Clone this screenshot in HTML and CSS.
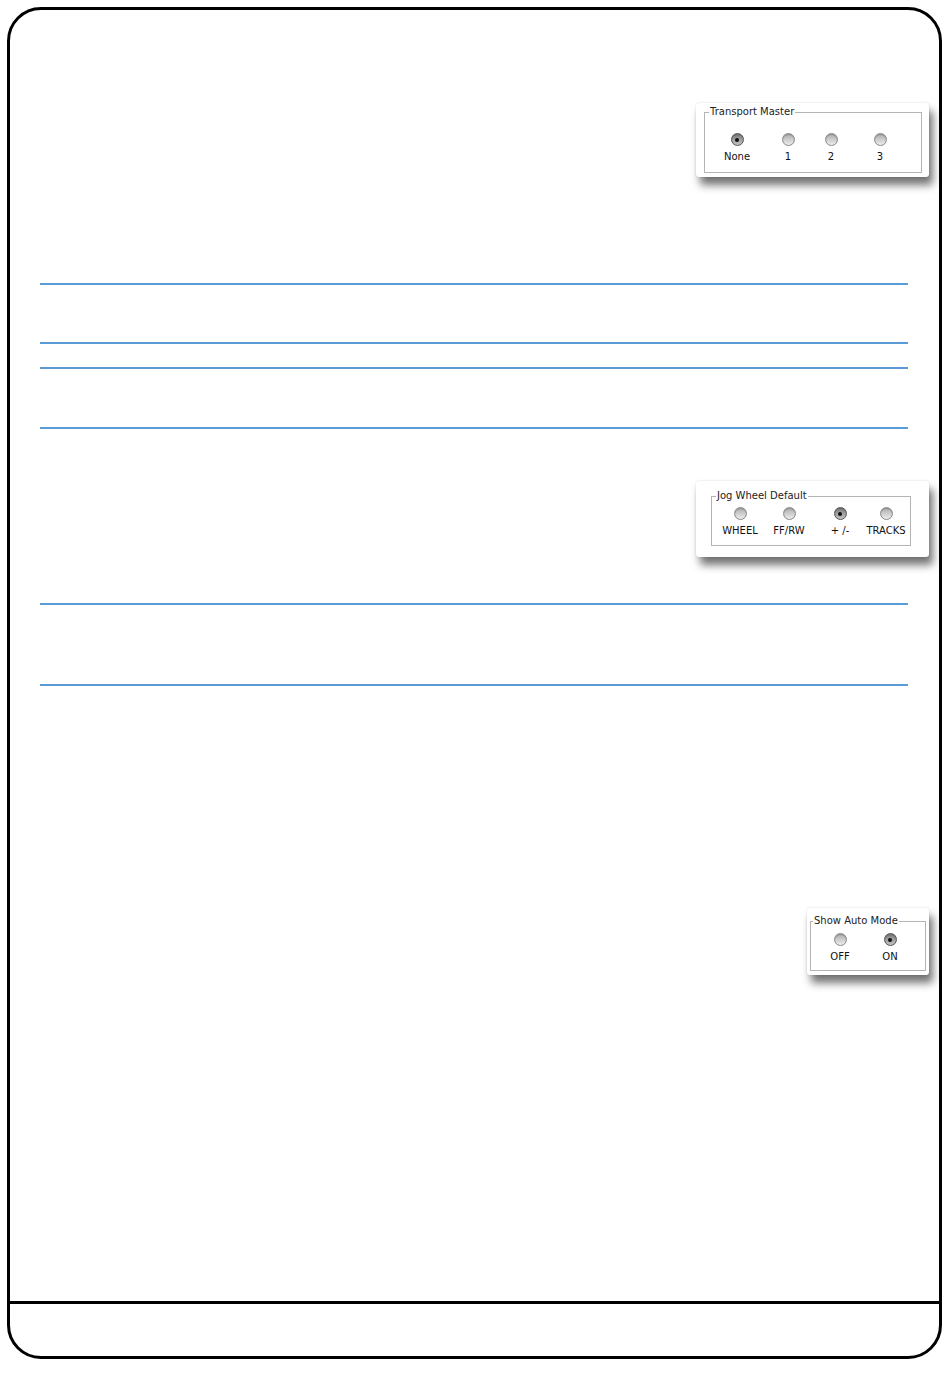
FILE: index.html
```html
<!DOCTYPE html>
<html lang="en">
<head>
    <meta charset="UTF-8">
    <title>Control Surface Settings</title>
    <link rel="stylesheet" href="styles.css">
</head>
<body>
    <div class="page">
        <div class="content">
            <!-- Transport Master -->
            <div class="panel panel-transport">
                <fieldset>
                    <legend>Transport Master</legend>
                    <div class="options">
                        <div class="option"><span class="radio checked"></span><span class="label">None</span></div>
                        <div class="option"><span class="radio"></span><span class="label">1</span></div>
                        <div class="option"><span class="radio"></span><span class="label">2</span></div>
                        <div class="option"><span class="radio"></span><span class="label">3</span></div>
                    </div>
                </fieldset>
            </div>

            <hr class="rule rule-1">
            <hr class="rule rule-2">
            <hr class="rule rule-3">
            <hr class="rule rule-4">

            <!-- Jog Wheel -->
            <div class="panel panel-jog">
                <fieldset>
                    <legend>Jog Wheel Default</legend>
                    <div class="options">
                        <div class="option"><span class="radio"></span><span class="label">WHEEL</span></div>
                        <div class="option"><span class="radio"></span><span class="label">FF/RW</span></div>
                        <div class="option"><span class="radio checked"></span><span class="label">+ /-</span></div>
                        <div class="option"><span class="radio"></span><span class="label">TRACKS</span></div>
                    </div>
                </fieldset>
            </div>

            <hr class="rule rule-5">
            <hr class="rule rule-6">

            <!-- Show Auto Mode -->
            <div class="panel panel-auto">
                <fieldset>
                    <legend>Show Auto Mode</legend>
                    <div class="options">
                        <div class="option"><span class="radio"></span><span class="label">OFF</span></div>
                        <div class="option"><span class="radio checked"></span><span class="label">ON</span></div>
                    </div>
                </fieldset>
            </div>
        </div>
        <div class="footer"></div>
    </div>
</body>
</html>
```

FILE: styles.css
```css
* {
    box-sizing: border-box;
}

body {
    margin: 0;
    background: #ffffff;
    font-family: "DejaVu Sans", sans-serif;
    color: #111;
}

.page {
    width: 935px;
    height: 1352px;
    margin: 7px 0 0 7px;
    border: 3px solid #000;
    border-radius: 34px;
    display: flex;
    flex-direction: column;
}

.content {
    flex: 1;
    display: flex;
    flex-direction: column;
}

.footer {
    height: 55px;
    border-top: 3px solid #000;
}

/* lignes bleues */
.rule {
    height: 2px;
    border: none;
    background: #5b9bd5;
    margin: 0 31px 0 30px;
}

.rule-1 { margin-top: 106px; }
.rule-2 { margin-top: 57px; }
.rule-3 { margin-top: 23px; }
.rule-4 { margin-top: 58px; }
.rule-5 { margin-top: 46px; }
.rule-6 { margin-top: 79px; }

/* panneaux */
.panel {
    align-self: flex-end;
    margin-right: 10px;
    background: #ffffff;
    border-radius: 3px;
    box-shadow: 4px 8px 8px rgba(0, 0, 0, 0.55), 0 0 2px rgba(0, 0, 0, 0.15);
}

fieldset {
    margin: 0;
    padding: 0;
    border: 1px solid #b4b4b4;
    min-width: 0;
}

legend {
    font-size: 10px;
    line-height: 12px;
    padding: 0 1px;
    margin-left: 4px;
    color: #222;
}

.options {
    display: grid;
}

.option {
    display: flex;
    flex-direction: column;
    align-items: center;
}

.label {
    font-size: 10px;
    line-height: 12px;
    white-space: nowrap;
}

.radio {
    width: 13px;
    height: 13px;
    border-radius: 50%;
    border: 1px solid #8a8a8a;
    background: linear-gradient(#aeaeae, #ececec);
    box-shadow: inset 0 1px 1px rgba(0, 0, 0, 0.2);
    position: relative;
}

.radio.checked {
    border-color: #555;
    background: linear-gradient(#7c7c7c, #c2c2c2);
}

.radio.checked::after {
    content: "";
    position: absolute;
    left: 3.5px;
    top: 3.5px;
    width: 4px;
    height: 4px;
    border-radius: 50%;
    background: #111;
}

.panel-transport {
    width: 233px;
    margin-top: 93px;
    padding: 3px 7px 4px 8px;
}

.panel-transport .options {
    grid-template-columns: 64px 38px 48px 50px;
    padding: 15px 0 9px;
}

.panel-transport .option {
    gap: 5px;
}

.panel-jog {
    width: 233px;
    margin-top: 52px;
    padding: 9px 18px 11px 15px;
}

.panel-jog .options {
    grid-template-columns: 56px 42px 60px 32px;
    padding: 5px 0 8px;
}

.panel-jog .option {
    gap: 5px;
}

.panel-auto {
    width: 122px;
    margin-top: 222px;
    padding: 7px 3px 4px 3px;
}

.panel-auto legend {
    margin-left: 2px;
}

.panel-auto .options {
    grid-template-columns: 58px 42px;
    padding: 6px 0 7px;
}

.panel-auto .option {
    gap: 5px;
}
```
